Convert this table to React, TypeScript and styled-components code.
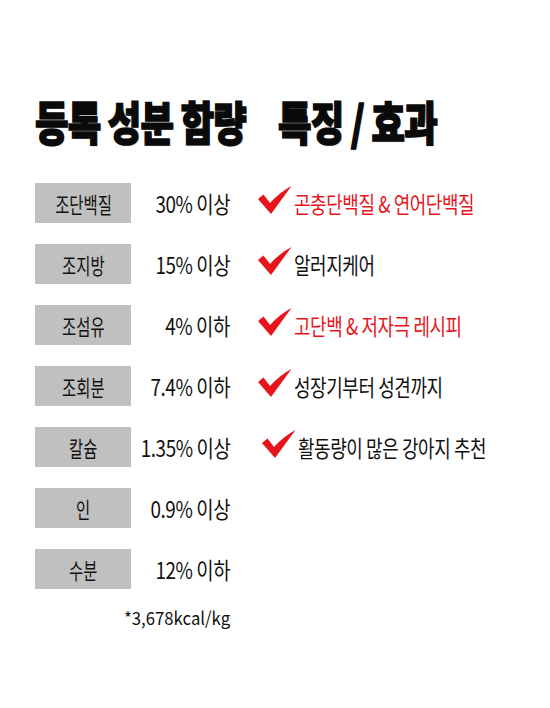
import styled, { createGlobalStyle } from "styled-components";

const GlobalStyle = createGlobalStyle`
  html, body {
    margin: 0;
    padding: 0;
    background: #ffffff;
  }
  body {
    font-family: "Noto Sans CJK KR", "Noto Sans", sans-serif;
    color: #111;
  }
`;

const Page = styled.div`
  width: 550px;
  height: 708px;
  box-sizing: border-box;
  padding: 92px 0 0 35px;
  background: #fff;
`;

const Header = styled.div`
  display: flex;
  align-items: center;
  height: 56px;
`;

const Title = styled.h1<{ $width: number }>`
  margin: 0;
  width: ${(p) => p.$width}px;
  font-size: 46px;
  font-weight: 900;
  line-height: 56px;
  letter-spacing: -1px;
  white-space: nowrap;
  color: #0a0a0a;
  -webkit-text-stroke: 1.6px #0a0a0a;
  text-shadow: 1px 1px 1px rgba(0, 0, 0, 0.35);
  transform: scaleX(0.79);
  transform-origin: left center;
`;

const Table = styled.div`
  display: grid;
  grid-template-columns: 96px 99px auto;
  grid-auto-rows: 40px;
  row-gap: 21px;
  margin-top: 35px;
  align-items: center;
`;

const Label = styled.div`
  height: 40px;
  background: #c0c0c0;
  display: flex;
  align-items: center;
  justify-content: center;
`;

const Squeeze = styled.span<{ $origin: string; $scale: number }>`
  display: inline-block;
  flex: none;
  white-space: nowrap;
  transform: scaleX(${(p) => p.$scale});
  transform-origin: ${(p) => p.$origin} center;
`;

const LabelText = styled(Squeeze)`
  font-size: 22px;
  color: #111;
  line-height: 1;
`;

const Value = styled.div`
  display: flex;
  justify-content: flex-end;
  font-size: 23px;
  line-height: 1;
  color: #111;
  letter-spacing: -0.5px;
`;

const Feature = styled.div<{ $shift?: number; $red?: boolean }>`
  display: flex;
  align-items: center;
  padding-left: ${(p) => 28 + (p.$shift || 0)}px;
  font-size: 23px;
  line-height: 1;
  color: ${(p) => (p.$red ? "#e8141c" : "#111")};
  letter-spacing: -0.5px;
`;

const Check = styled.svg`
  flex: none;
  width: 34px;
  height: 28px;
  margin-right: 2px;
  margin-top: -6px;
`;

const Note = styled.div`
  grid-column: 1 / 3;
  display: flex;
  justify-content: flex-end;
  font-size: 18px;
  color: #111;
  margin-top: -26px;
`;

type Row = { label: string; value: string; feature?: string; red?: boolean; shift?: number };

const rows: Row[] = [
  { label: "조단백질", value: "30% 이상", feature: "곤충단백질 & 연어단백질", red: true },
  { label: "조지방", value: "15% 이상", feature: "알러지케어" },
  { label: "조섬유", value: "4% 이하", feature: "고단백 & 저자극 레시피", red: true },
  { label: "조회분", value: "7.4% 이하", feature: "성장기부터 성견까지" },
  { label: "칼슘", value: "1.35% 이상", feature: "활동량이 많은 강아지 추천", shift: 4 },
  { label: "인", value: "0.9% 이상" },
  { label: "수분", value: "12% 이하" },
];

function CheckMark() {
  return (
    <Check viewBox="0 0 34 28">
      <path d="M0 13 L5.5 8.5 L12 17 Q22 6 33.5 0 L13 28 Z" fill="#e8141c" />
    </Check>
  );
}

function App() {
  return (
    <>
      <GlobalStyle />
      <Page>
        <Header>
          <Title $width={243}>등록 성분 함량</Title>
          <Title $width={200}>특징 / 효과</Title>
        </Header>
        <Table>
          {rows.map((r) => (
            <>
              <Label key={r.label + "l"}>
                <LabelText $origin="center" $scale={0.7}>
                  {r.label}
                </LabelText>
              </Label>
              <Value key={r.label + "v"}>
                <Squeeze $origin="right" $scale={0.82}>
                  {r.value}
                </Squeeze>
              </Value>
              <Feature key={r.label + "f"} $red={r.red} $shift={r.shift}>
                {r.feature ? (
                  <>
                    <CheckMark />
                    <Squeeze $origin="left" $scale={0.78}>
                      {r.feature}
                    </Squeeze>
                  </>
                ) : null}
              </Feature>
            </>
          ))}
          <Note>
            <Squeeze $origin="right" $scale={0.93}>
              *3,678kcal/kg
            </Squeeze>
          </Note>
        </Table>
      </Page>
    </>
  );
}

export default App;
